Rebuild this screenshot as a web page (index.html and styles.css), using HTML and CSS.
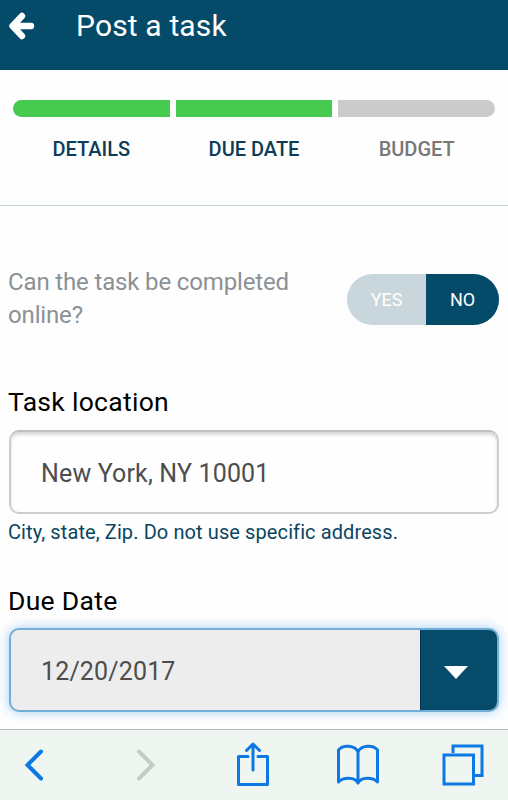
FILE: index.html
```
<!DOCTYPE html>
<html lang="en">
<head>
    <meta charset="UTF-8">
    <meta name="viewport" content="width=device-width, initial-scale=1.0">
    <title>Post a task</title>
    <link rel="stylesheet" href="styles.css">
</head>
<body>

    <header>
        <a class="back">
            <svg width="28" height="28" viewBox="0 0 28 28">
                <path d="M14 4 L4.5 14 L14 24 M5 14 H23" fill="none" stroke="#fff" stroke-width="6.4" stroke-linecap="round" stroke-linejoin="round"/>
            </svg>
        </a>
        <h1>Post a task</h1>
    </header>

    <!-- Progress Steps -->
    <ul class="steps">
        <li class="done">DETAILS</li>
        <li class="done">DUE DATE</li>
        <li>BUDGET</li>
    </ul>

    <!-- Task Form -->
    <main>
        <div class="online">
            <p>Can the task be completed online?</p>
            <div class="toggle">
                <span>YES</span>
                <span class="selected">NO</span>
            </div>
        </div>

        <label>Task location</label>
        <div class="field">New York, NY 10001</div>
        <p class="hint">City, state, Zip. Do not use specific address.</p>

        <label class="date-label">Due Date</label>
        <div class="field date">
            <span>12/20/2017</span>
            <div class="dropdown">
                <svg width="24" height="13" viewBox="0 0 24 13">
                    <path d="M0 0 H24 L12 13 Z" fill="#fff"/>
                </svg>
            </div>
        </div>
    </main>

    <!-- Browser Toolbar -->
    <footer>
        <svg width="20" height="32" viewBox="0 0 20 32">
            <path class="icon chevron" d="M17 2.5 L3.5 16 L17 29.5"/>
        </svg>
        <svg width="20" height="32" viewBox="0 0 20 32">
            <path class="icon chevron disabled" d="M3 2.5 L16.5 16 L3 29.5"/>
        </svg>
        <svg width="34" height="46" viewBox="0 0 34 46">
            <path class="icon share" d="M12 14.5 H2.5 V42.5 H31.5 V14.5 H22 M17 28 V2 M10.5 8.5 L17 2 L23.5 8.5"/>
        </svg>
        <svg width="42" height="42" viewBox="0 0 42 42">
            <path class="icon book" d="M21 8 C18 1 6 0.5 1.5 6 V38 C6 33 18 32.5 21 39 C24 32.5 36 33 40.5 38 V6 C36 0.5 24 1 21 8 V38"/>
        </svg>
        <svg width="42" height="42" viewBox="0 0 42 42">
            <path class="icon" d="M2 11 H31.5 V40 H2 Z M11 9 V2 H40 V31.5 H33"/>
        </svg>
    </footer>

</body>
</html>
```
FILE: styles.css
```
* {
    box-sizing: border-box;
}

body {
    font-family: Roboto, sans-serif;
    margin: 0;
    height: 800px;
    display: flex;
    flex-direction: column;
    background-color: #fefefe;
    overflow: hidden;
}

header {
    display: flex;
    height: 70px;
    padding: 8px 8px 0;
    background-color: #044b6a;
    border-bottom: 1px solid #063f59;
    color: white;
}

.back {
    width: 68px;
    padding-top: 4px;
}

.back svg {
    display: block;
}

h1 {
    margin: 0;
    font-size: 30px;
    font-weight: 400;
    line-height: 35px;
    letter-spacing: 0.15px;
}

.steps {
    display: grid;
    grid-template-columns: repeat(3, 1fr);
    gap: 6px;
    height: 136px;
    margin: 0;
    padding: 29.5px 13px 0;
    list-style: none;
    border-bottom: 1px solid #c3d3d8;
}

.steps li {
    color: #777;
    font-size: 20px;
    font-weight: 500;
    line-height: 24px;
    text-align: center;
    text-indent: -2px;
}

.steps li::before {
    content: "";
    display: block;
    height: 17px;
    margin-bottom: 20px;
    background-color: #cbcbcb;
}

.steps li:first-child::before {
    border-radius: 9px 0 0 9px;
}

.steps li:last-child::before {
    border-radius: 0 9px 9px 0;
}

.steps .done {
    color: #0b3c58;
}

.steps .done::before {
    background-color: #46ca50;
}

main {
    flex: 1;
    padding: 60px 9px 0;
}

.online {
    display: flex;
    justify-content: space-between;
    height: 118px;
}

.online p {
    width: 300px;
    margin: 0 0 0 -1px;
    color: #8b9194;
    font-size: 24px;
    line-height: 33px;
    letter-spacing: -0.15px;
}

.toggle {
    display: flex;
    width: 152px;
    height: 51px;
    margin-top: 8px;
    border-radius: 26px;
    overflow: hidden;
    background-color: #c9d6dc;
    color: white;
    font-size: 18px;
    line-height: 52px;
    text-align: center;
}

.toggle span {
    width: 79px;
}

.toggle .selected {
    width: 73px;
    background-color: #044b6a;
}

label {
    display: block;
    height: 46px;
    margin-left: -1px;
    color: #000;
    font-size: 26.5px;
    line-height: 35px;
    letter-spacing: 0.3px;
}

.date-label {
    line-height: 38px;
}

.field {
    height: 84px;
    padding-left: 30px;
    border: 2px solid #cdcdcd;
    border-top-color: #c0c0c0;
    border-radius: 10px;
    box-shadow: inset 0 3px 3px rgba(0, 0, 0, 0.14);
    color: #4d4d4d;
    font-size: 25px;
    line-height: 83px;
    letter-spacing: 0.15px;
}

.hint {
    height: 68px;
    margin: 0 0 0 -1px;
    color: #0b4560;
    font-size: 20px;
    line-height: 36px;
    letter-spacing: 0.1px;
}

.date {
    display: flex;
    justify-content: space-between;
    overflow: hidden;
    background-color: #ededed;
    border-color: #73aed6;
    box-shadow: 0 0 12px rgba(102, 175, 233, 0.6);
}

.dropdown {
    display: flex;
    align-items: center;
    justify-content: center;
    width: 77px;
    padding: 4px 6px 0 0;
    background-color: #064b69;
    border-left: 1px solid #05334c;
}

footer {
    display: grid;
    grid-template-columns: 112px 99.5px 101.5px 105px 42px;
    align-items: center;
    height: 71px;
    padding-left: 24px;
    background-color: #eff6f1;
    border-top: 1px solid #b9bdbb;
}

.icon {
    fill: none;
    stroke: #0b78e3;
    stroke-width: 3;
}

.share,
.book {
    stroke-linecap: round;
    stroke-linejoin: round;
}

.chevron {
    stroke-width: 4;
    stroke-linecap: round;
}

.disabled {
    stroke: #c5cbc7;
}
```
